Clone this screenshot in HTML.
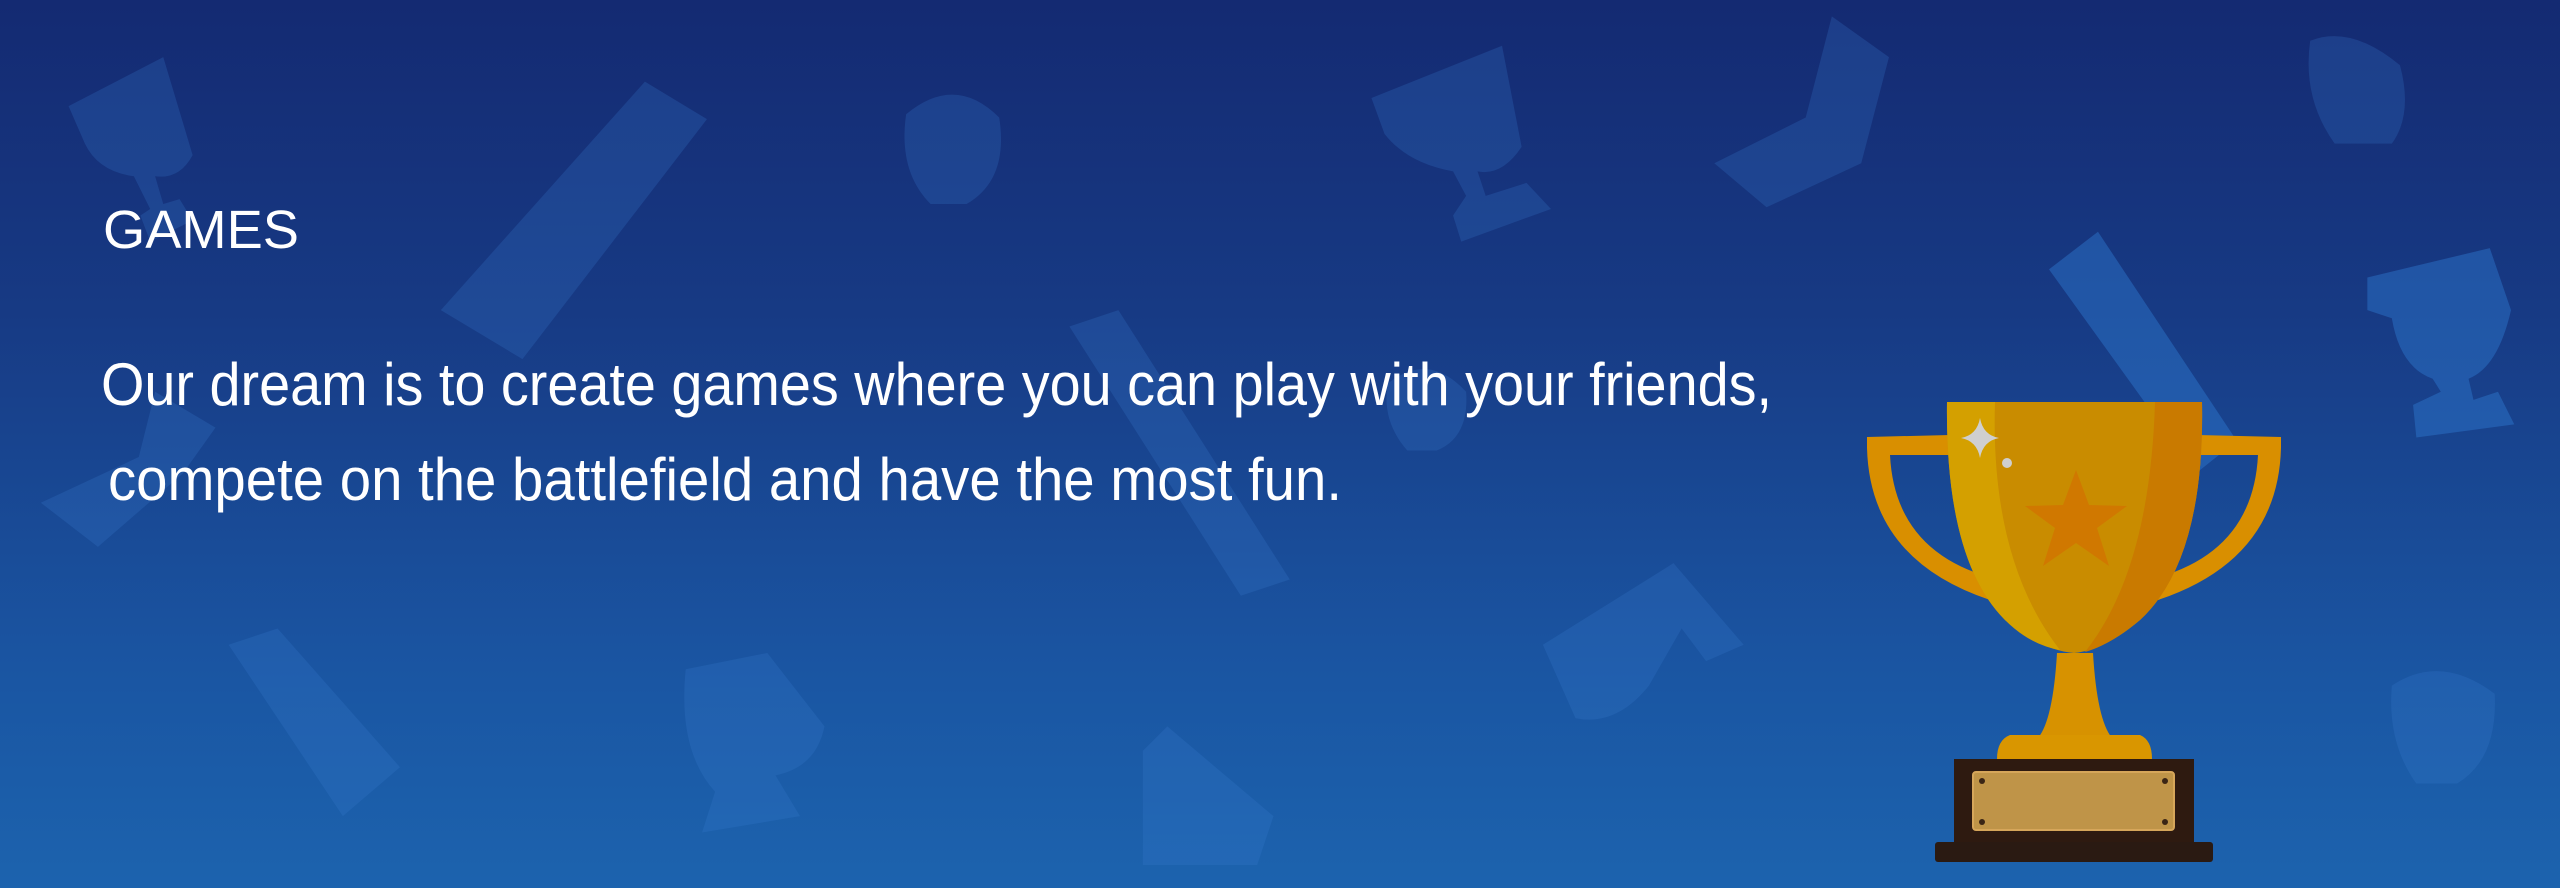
<!DOCTYPE html>
<html><head><meta charset="utf-8"><style>
html,body{margin:0;padding:0;width:2560px;height:888px;overflow:hidden}
body{background:linear-gradient(#142a72 0%,#173a84 35%,#1a55a2 75%,#1c63ae 100%);position:relative;font-family:"Liberation Sans",sans-serif}
svg{position:absolute;left:0;top:0}
</style></head><body>
<svg width="2560" height="888" viewBox="0 0 1568 544" preserveAspectRatio="none">
<g fill="#3a7cd0" fill-opacity="0.24">
 <path d="M42 65 L100 35 L118 95 Q110 110 95 108 L100 125 L110 122 L118 135 L92 148 L86 132 L92 128 L82 108 Q60 105 52 88 Z"/>
 <path d="M270 190 L395 50 L433 73 L320 220 Z"/>
 <path d="M555 70 Q585 45 612 72 Q618 110 592 125 L570 125 Q550 105 555 70 Z"/>
 <path d="M840 60 L920 28 L932 90 Q920 108 905 105 L910 120 L935 112 L950 128 L895 148 L890 132 L898 120 L890 105 Q862 100 848 82 Z"/>
 <path d="M1122 10 L1157 35 L1140 100 L1082 127 L1050 100 L1106 72 Z"/>
 <path d="M1415 25 Q1440 15 1470 40 Q1478 70 1465 88 L1430 88 Q1410 60 1415 25 Z"/>
 <path d="M655 200 L685 190 L790 355 L760 365 Z"/>
 <path d="M850 235 Q875 215 898 240 Q900 268 880 276 L862 276 Q846 258 850 235 Z"/>
 <path d="M95 240 L132 262 L112 290 L60 335 L25 308 L85 280 Z"/>
 <path d="M945 395 L1025 345 L1068 395 L1045 405 L1030 385 L1010 420 Q990 445 965 440 Z"/>
 <path d="M420 410 L470 400 L505 445 Q500 470 475 475 L490 500 L430 510 L438 485 Q415 460 420 410 Z"/>
 <path d="M140 395 L170 385 L245 470 L210 500 Z"/>
 <path d="M700 460 L715 445 L780 500 L770 530 L700 530 Z"/>
 <path d="M1465 420 Q1495 400 1528 425 Q1530 465 1505 480 L1480 480 Q1462 455 1465 420 Z"/>
</g>
<g fill="#2f7ad0" fill-opacity="0.45">
 <path d="M1450 170 L1525 152 L1538 190 Q1530 225 1512 232 L1515 245 L1530 240 L1540 260 L1480 268 L1478 248 L1495 240 L1490 232 Q1470 225 1465 195 L1450 190 Z"/>
 <path d="M1255 165 L1285 142 L1370 270 L1345 290 Z"/>
</g>
</svg>
<svg width="2560" height="888" viewBox="0 0 2560 888">
 <text x="103" y="248" fill="#fff" font-family="Liberation Sans, sans-serif" font-size="54" textLength="196" lengthAdjust="spacingAndGlyphs">GAMES</text>
 <text x="101" y="405" fill="#fff" font-family="Liberation Sans, sans-serif" font-size="60" textLength="1671" lengthAdjust="spacingAndGlyphs">Our dream is to create games where you can play with your friends,</text>
 <text x="108" y="500" fill="#fff" font-family="Liberation Sans, sans-serif" font-size="60" textLength="1234" lengthAdjust="spacingAndGlyphs">compete on the battlefield and have the most fun.</text>
 <g>
  <path d="M1867 437 L1867 448 Q1870 560 1990 600 L2000 580 Q1895 555 1890 455 L1950 455 L1950 435 Z" fill="#d98f00"/>
  <path d="M2281 437 L2281 448 Q2278 560 2158 600 L2148 580 Q2253 555 2258 455 L2198 455 L2198 435 Z" fill="#d98f00"/>
  <path d="M1947 402 L2202 402 Q2205 560 2140 620 Q2105 650 2074 653 Q2040 650 2005 620 Q1945 560 1947 402 Z" fill="#c98c00"/>
  <path d="M1947 402 L1995 402 Q1990 560 2060 650 Q2030 645 2005 620 Q1945 560 1947 402 Z" fill="#d4a000"/>
  <path d="M2155 402 L2202 402 Q2205 560 2140 620 Q2110 645 2085 652 Q2150 570 2155 402 Z" fill="#c97a00"/>
  <path d="M2076 470 L2089 505 L2127 506 L2097 528 L2109 566 L2076 543 L2043 566 L2055 528 L2025 506 L2063 505 Z" fill="#d07800"/>
  <path d="M1980 418 Q1983 435 1999 438 Q1983 441 1980 458 Q1977 441 1961 438 Q1977 435 1980 418 Z" fill="#cfcfcf"/>
  <circle cx="2007" cy="463" r="5" fill="#cfcfcf"/>
  <path d="M2057 653 L2093 653 Q2097 720 2112 738 L2038 738 Q2053 720 2057 653 Z" fill="#d79200"/>
  <path d="M2010 735 L2140 735 Q2152 740 2152 759 L1997 759 Q1997 740 2010 735 Z" fill="#d99600"/>
  <rect x="1954" y="759" width="240" height="84" fill="#2e1a10"/>
  <rect x="1935" y="842" width="278" height="20" rx="3" fill="#2a1a12"/>
  <rect x="1973" y="772" width="201" height="58" rx="3" fill="#bf9448" stroke="#d6a65a" stroke-width="2"/>
  <circle cx="1982" cy="781" r="3" fill="#3a2515"/><circle cx="2165" cy="781" r="3" fill="#3a2515"/>
  <circle cx="1982" cy="822" r="3" fill="#3a2515"/><circle cx="2165" cy="822" r="3" fill="#3a2515"/>
 </g>
</svg>
</body></html>
